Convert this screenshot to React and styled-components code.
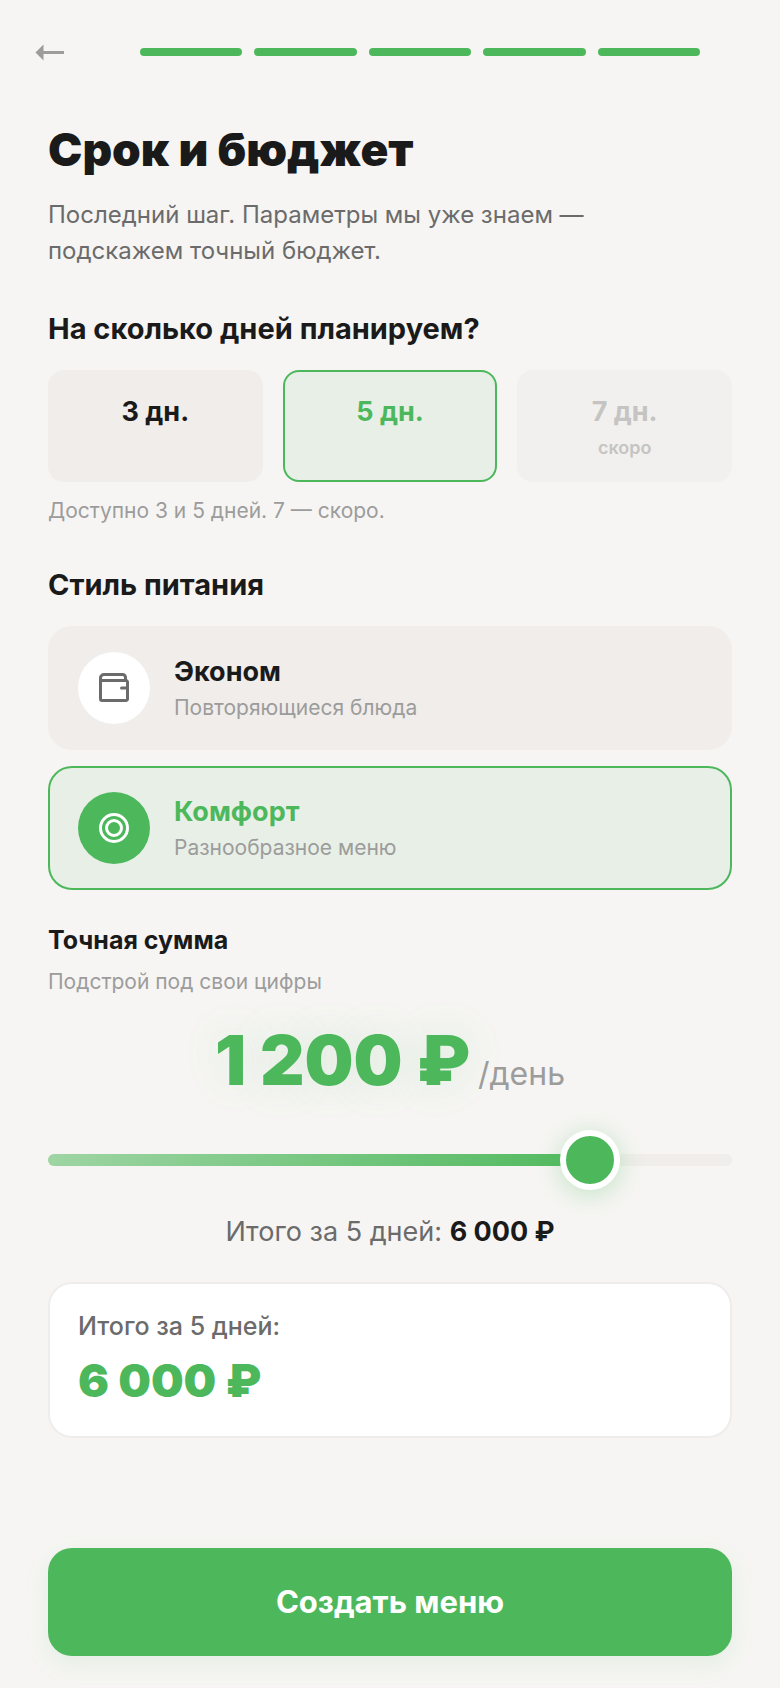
import React, { useState } from "react";
import styled, { createGlobalStyle } from "styled-components";

const MIN_BUDGET = 380;
const MAX_BUDGET = 1380;

const dayOptions = [
  { value: 3, label: "3 дн." },
  { value: 5, label: "5 дн." },
  { value: 7, label: "7 дн.", note: "скоро" },
];

const styleOptions = [
  { id: "econom", title: "Эконом", text: "Повторяющиеся блюда" },
  { id: "comfort", title: "Комфорт", text: "Разнообразное меню" },
];

const formatPrice = (value) =>
  `${String(value).replace(/\B(?=(\d{3})+(?!\d))/g, "\u00a0")} ₽`;

const ArrowIcon = () => (
  <svg width="30" height="18" viewBox="0 0 30 18" aria-hidden="true">
    <path d="M0.5 9.500 L8.500 1.500 V17.500 Z" fill="#9c9c9c" />
    <path d="M8 9.500 H29" stroke="#9c9c9c" strokeWidth="3" />
  </svg>
);

const WalletIcon = () => (
  <svg width="32" height="32" viewBox="0 0 32 32" fill="none" aria-hidden="true">
    <g stroke="currentColor" strokeWidth="3" strokeLinejoin="round">
      <path d="M2.5 8.5 H28 a1.5 1.5 0 0 1 1.5 1.5 V27 a1.5 1.5 0 0 1 -1.5 1.5 H4 a1.5 1.5 0 0 1 -1.5 -1.5 Z" />
      <path d="M2.5 9 V6 a3.5 3.5 0 0 1 3.5 -3.5 H24.5 a3 3 0 0 1 3 3 V8.5" />
      <path d="M23.5 16 H28" strokeLinecap="round" />
    </g>
  </svg>
);

const TargetIcon = () => (
  <svg width="32" height="32" viewBox="0 0 32 32" fill="none" aria-hidden="true">
    <circle cx="16" cy="16" r="13.5" stroke="currentColor" strokeWidth="3" />
    <circle cx="16" cy="16" r="7.5" stroke="currentColor" strokeWidth="3" />
  </svg>
);

const App = () => {
  const [days, setDays] = useState(5);
  const [style, setStyle] = useState("comfort");
  const [budget, setBudget] = useState(1200);

  const percent = ((budget - MIN_BUDGET) / (MAX_BUDGET - MIN_BUDGET)) * 100;
  const total = formatPrice(budget * days);

  return (
    <>
      <GlobalStyle />
      <Page>
        <Header>
          <BackButton type="button" aria-label="Назад">
            <ArrowIcon />
          </BackButton>
          <Progress>
            {[1, 2, 3, 4, 5].map((step) => (
              <ProgressStep key={step} />
            ))}
          </Progress>
        </Header>

        <Content>
          <Title>Срок и бюджет</Title>
          <Lead>
            Последний шаг. Параметры мы уже знаем —<br />
            подскажем точный бюджет.
          </Lead>

          <SectionTitle>На сколько дней планируем?</SectionTitle>
          <DayList>
            {dayOptions.map((item) => (
              <DayButton
                key={item.value}
                type="button"
                disabled={Boolean(item.note)}
                $active={days === item.value}
                aria-pressed={days === item.value}
                onClick={() => setDays(item.value)}
              >
                <span>{item.label}</span>
                {item.note && <small>{item.note}</small>}
              </DayButton>
            ))}
          </DayList>
          <Hint>Доступно 3 и 5 дней. 7 — скоро.</Hint>

          <SectionTitle>Стиль питания</SectionTitle>
          <StyleList>
            {styleOptions.map((item) => (
              <StyleButton
                key={item.id}
                type="button"
                $active={style === item.id}
                aria-pressed={style === item.id}
                onClick={() => setStyle(item.id)}
              >
                <IconCircle $active={style === item.id}>
                  {item.id === "econom" ? <WalletIcon /> : <TargetIcon />}
                </IconCircle>
                <StyleText>
                  <StyleName $active={style === item.id}>{item.title}</StyleName>
                  <StyleNote>{item.text}</StyleNote>
                </StyleText>
              </StyleButton>
            ))}
          </StyleList>

          <BudgetLabel htmlFor="budget">Точная сумма</BudgetLabel>
          <BudgetNote>Подстрой под свои цифры</BudgetNote>
          <Price>
            <strong>{formatPrice(budget)}</strong>
            <span>/день</span>
          </Price>
          <Slider
            id="budget"
            type="range"
            min={MIN_BUDGET}
            max={MAX_BUDGET}
            step="10"
            value={budget}
            style={{ "--fill": `${percent}%` }}
            onChange={(e) => setBudget(Number(e.target.value))}
          />
          <Summary>
            Итого за {days} дней: <b>{total}</b>
          </Summary>

          <TotalCard>
            <p>Итого за {days} дней:</p>
            <strong>{total}</strong>
          </TotalCard>

          <SubmitButton type="button">Создать меню</SubmitButton>
        </Content>
      </Page>
    </>
  );
};

export default App;

const GlobalStyle = createGlobalStyle`
  * {
    box-sizing: border-box;
  }
  body {
    margin: 0;
    background: #f6f5f3;
    color: #1a1a1a;
    font-family: Inter, "Open Sans", sans-serif;
  }
  h1, h2, p {
    margin: 0;
  }
  button {
    padding: 0;
    border: none;
    font-family: inherit;
    cursor: pointer;
  }
`;

const Page = styled.div`
  display: flex;
  flex-direction: column;
  min-height: 100vh;
`;

const Header = styled.header`
  display: flex;
  align-items: center;
  gap: 60px;
  height: 104px;
  padding: 0 80px 0 20px;
`;

const BackButton = styled.button`
  display: flex;
  align-items: center;
  justify-content: center;
  width: 60px;
  height: 60px;
  background: none;
`;

const Progress = styled.div`
  display: flex;
  flex: 1;
  gap: 12px;
`;

const ProgressStep = styled.div`
  flex: 1;
  height: 8px;
  border-radius: 4px;
  background: #4db85b;
`;

const Content = styled.main`
  display: flex;
  flex: 1;
  flex-direction: column;
  padding: 17px 48px 32px;
`;

const Title = styled.h1`
  font-size: 46px;
  line-height: 56px;
  font-weight: 900;
`;

const Lead = styled.p`
  margin-top: 20px;
  color: #6b6b6b;
  font-size: 24px;
  line-height: 36px;
`;

const SectionTitle = styled.h2`
  margin: 42px 0 23px;
  font-size: 29px;
  line-height: 36px;
  font-weight: 700;
`;

const DayList = styled.div`
  display: grid;
  grid-template-columns: repeat(3, 1fr);
  gap: 20px;
`;

const DayButton = styled.button`
  display: flex;
  flex-direction: column;
  align-items: center;
  gap: 6px;
  min-height: 112px;
  padding: 22px 0 20px;
  border: 2px solid ${({ $active }) => ($active ? "#4db85b" : "transparent")};
  border-radius: 16px;
  background: ${({ $active }) => ($active ? "#e7efe6" : "#f0edea")} border-box;
  color: ${({ $active }) => ($active ? "#4db85b" : "#1a1a1a")};
  font-size: 27px;
  line-height: 36px;
  font-weight: 700;

  > small {
    font-size: 18px;
    line-height: 24px;
    font-weight: 600;
  }
  &:disabled {
    background: #f1f0ee border-box;
    color: #c5c4c2;
    cursor: default;
  }
`;

const Hint = styled.p`
  margin-top: 15px;
  color: #9c9c9c;
  font-size: 21px;
  line-height: 28px;
`;

const StyleList = styled.div`
  display: flex;
  flex-direction: column;
  gap: 16px;
`;

const StyleButton = styled.button`
  display: flex;
  align-items: center;
  gap: 24px;
  padding: 24px 28px;
  border: 2px solid ${({ $active }) => ($active ? "#4db85b" : "transparent")};
  border-radius: 24px;
  background: ${({ $active }) => ($active ? "#e7efe6" : "#f0edea")} border-box;
  text-align: left;
`;

const IconCircle = styled.span`
  display: flex;
  align-items: center;
  justify-content: center;
  width: 72px;
  height: 72px;
  border-radius: 50%;
  background: ${({ $active }) => ($active ? "#4db85b" : "#fff")};
  color: ${({ $active }) => ($active ? "#fff" : "#6b6b6b")};
`;

const StyleText = styled.span`
  display: flex;
  flex-direction: column;
  gap: 4px;
`;

const StyleName = styled.span`
  color: ${({ $active }) => ($active ? "#4db85b" : "#1a1a1a")};
  font-size: 27px;
  line-height: 36px;
  font-weight: 700;
`;

const StyleNote = styled.span`
  color: #9c9c9c;
  font-size: 21px;
  line-height: 28px;
`;

const BudgetLabel = styled.label`
  margin-top: 34px;
  font-size: 25px;
  line-height: 32px;
  font-weight: 700;
`;

const BudgetNote = styled.p`
  margin-top: 12px;
  color: #9c9c9c;
  font-size: 21px;
  line-height: 28px;
`;

const Price = styled.div`
  display: flex;
  align-items: baseline;
  justify-content: center;
  gap: 8px;
  margin-top: 24px;

  > strong {
    color: #4db85b;
    font-size: 69px;
    line-height: 80px;
    font-weight: 900;
    text-shadow: 0 0 40px rgba(77, 184, 91, 0.15);
  }
  > span {
    color: #9c9c9c;
    font-size: 32px;
    line-height: 40px;
  }
`;

const Slider = styled.input`
  appearance: none;
  width: 100%;
  height: 60px;
  margin: 30px 0 0;
  background: none;
  cursor: pointer;

  &::-webkit-slider-runnable-track {
    height: 12px;
    border-radius: 6px;
    background:
      linear-gradient(135deg, #9fd5a4, #4db85b) 0 0 / var(--fill) 100% no-repeat,
      #f0edea;
  }
  &::-webkit-slider-thumb {
    appearance: none;
    width: 60px;
    height: 60px;
    margin-top: -24px;
    border: 6px solid #fff;
    border-radius: 50%;
    background: #4db85b;
    box-shadow: 0 4px 24px rgba(77, 184, 91, 0.3);
  }
`;

const Summary = styled.p`
  margin-top: 24px;
  color: #6b6b6b;
  font-size: 27px;
  line-height: 36px;
  text-align: center;

  > b {
    color: #1a1a1a;
    font-weight: 700;
  }
`;

const TotalCard = styled.section`
  margin-top: 32px;
  padding: 26px 28px 28px;
  border: 2px solid #eeedec;
  border-radius: 24px;
  background: #fff;

  > p {
    color: #6b6b6b;
    font-size: 25px;
    line-height: 32px;
    font-weight: 500;
  }
  > strong {
    display: block;
    margin-top: 10px;
    color: #4db85b;
    font-size: 46px;
    line-height: 56px;
    font-weight: 900;
  }
`;

const SubmitButton = styled.button`
  width: 100%;
  margin-top: auto;
  padding: 34px;
  border-radius: 24px;
  background: #4db85b;
  box-shadow: 0 8px 24px rgba(77, 184, 91, 0.1);
  color: #fff;
  font-size: 31px;
  line-height: 40px;
  font-weight: 700;
`;
